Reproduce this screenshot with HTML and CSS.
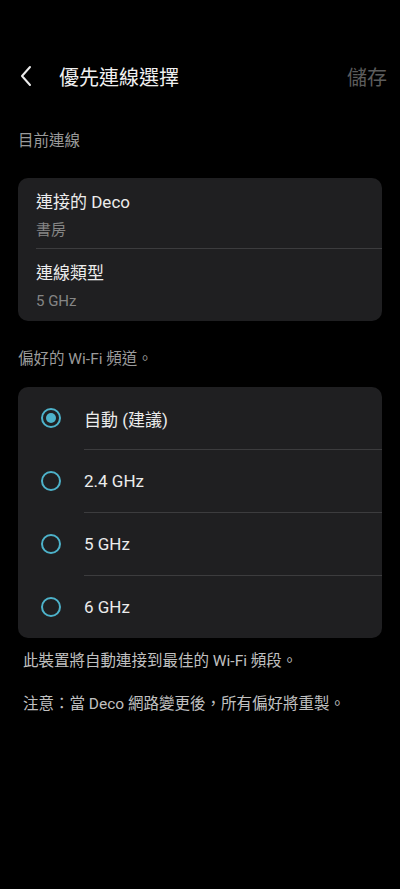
FILE: index.html
```html
<!DOCTYPE html>
<html lang="zh-Hant">
<head>
    <meta charset="UTF-8">
    <meta name="viewport" content="width=device-width, initial-scale=1.0">
    <title>優先連線選擇</title>
    <link rel="stylesheet" href="styles.css">
</head>
<body>
    <div class="header">
        <div class="back">
            <svg width="14" height="22" viewBox="0 0 14 22">
                <path d="M11 2 L3 11 L11 20" fill="none" stroke="#ececec" stroke-width="2" stroke-linecap="round" stroke-linejoin="round"/>
            </svg>
        </div>
        <h1>優先連線選擇</h1>
        <span class="save">儲存</span>
    </div>

    <p class="section-label first">目前連線</p>
    <div class="card">
        <div class="info-row">
            <div class="info-title">連接的 Deco</div>
            <div class="info-sub">書房</div>
        </div>
        <div class="info-row">
            <div class="info-title">連線類型</div>
            <div class="info-sub">5 GHz</div>
        </div>
    </div>

    <p class="section-label">偏好的 Wi-Fi 頻道<span class="fw">。</span></p>
    <div class="card">
        <div class="radio-row">
            <span class="radio checked"></span>
            <span class="radio-label">自動 (建議)</span>
        </div>
        <div class="radio-row">
            <span class="radio"></span>
            <span class="radio-label">2.4 GHz</span>
        </div>
        <div class="radio-row">
            <span class="radio"></span>
            <span class="radio-label">5 GHz</span>
        </div>
        <div class="radio-row">
            <span class="radio"></span>
            <span class="radio-label">6 GHz</span>
        </div>
    </div>

    <div class="notes">
        <p>此裝置將自動連接到最佳的 Wi-Fi 頻段<span class="fw">。</span></p>
        <p>注意<span class="fw">：</span>當 Deco 網路變更後<span class="fw">，</span>所有偏好將重製<span class="fw">。</span></p>
    </div>
</body>
</html>
```

FILE: styles.css
```css
body {
    margin: 0;
    padding: 0;
    background-color: #000;
    color: #ececec;
    font-family: Roboto, "Noto Sans CJK TC", sans-serif;
}
.fw {
    display: inline-block;
    width: 1em;
    text-align: center;
}
.header {
    display: flex;
    align-items: center;
    height: 48px;
    margin-top: 52px;
    padding: 0 13px 0 19px;
}
.back {
    display: flex;
    width: 40px;
}
.header h1 {
    flex: 1;
    margin: 0;
    font-size: 20px;
    font-weight: normal;
    color: #f0f0f0;
}
.save {
    font-size: 20px;
    color: #5c5c5c;
}
.section-label {
    margin: 27px 18px 17px;
    font-size: 15.5px;
    line-height: 22px;
    color: #9a9a9a;
}
.section-label.first {
    margin-top: 30px;
    margin-bottom: 26px;
}
.card {
    margin: 0 18px;
    background-color: #1f1f21;
    border-radius: 10px;
    overflow: hidden;
}
.info-row {
    margin-left: 18px;
    padding: 12px 0 8px;
}
.info-row + .info-row {
    border-top: 1px solid #3c3c3e;
    padding-bottom: 10px;
}
.info-title {
    font-size: 17px;
    line-height: 24px;
}
.info-sub {
    margin-top: 6px;
    font-size: 15px;
    line-height: 20px;
    color: #858585;
}
.radio-row {
    display: flex;
    align-items: stretch;
}
.radio {
    box-sizing: border-box;
    flex: none;
    width: 20px;
    height: 20px;
    margin: 21px 23px 0 23px;
    border: 2px solid #4db2ca;
    border-radius: 50%;
    display: flex;
    align-items: center;
    justify-content: center;
}
.radio-row + .radio-row .radio {
    margin-top: 22px;
}
.radio.checked::after {
    content: "";
    width: 10px;
    height: 10px;
    border-radius: 50%;
    background-color: #4db2ca;
}
.radio-label {
    flex: 1;
    display: flex;
    align-items: center;
    height: 62px;
    font-size: 17px;
    color: #ececec;
}
.radio-row + .radio-row .radio-label {
    border-top: 1px solid #3c3c3e;
}
.notes {
    margin: 12px 23px 0;
}
.notes p {
    margin: 0 0 21px;
    font-size: 15.5px;
    line-height: 22px;
    color: #c0c0c0;
}
```
